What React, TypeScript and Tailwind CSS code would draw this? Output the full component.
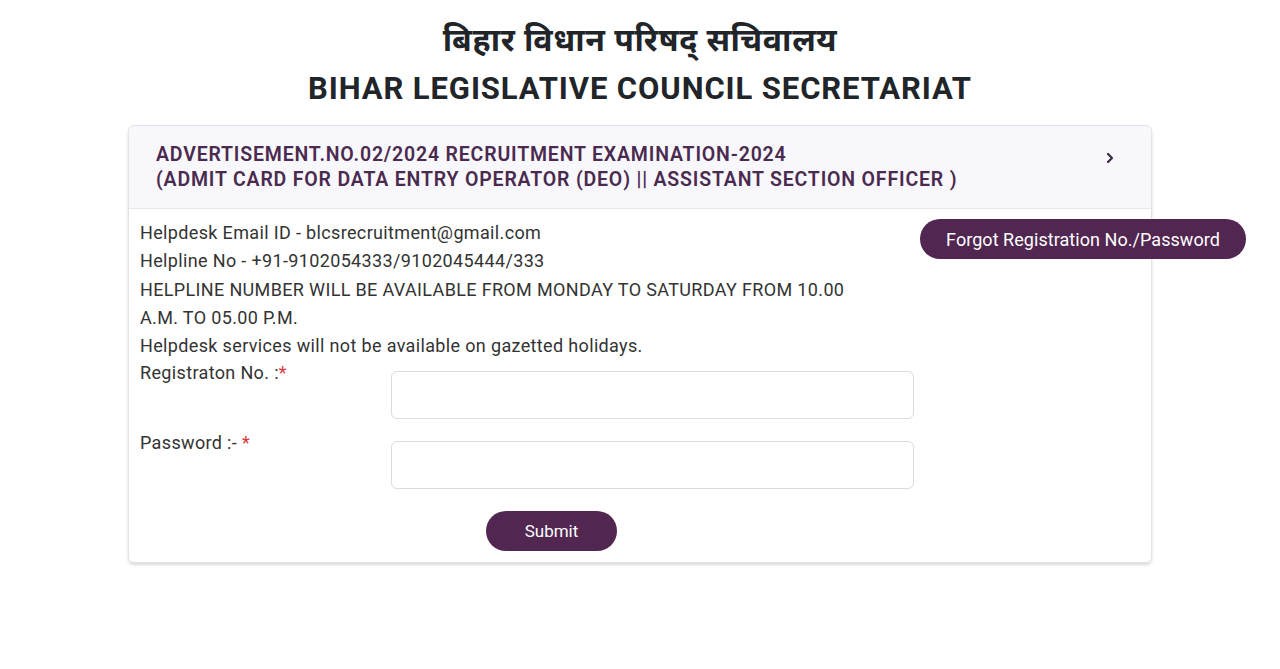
import React from "react";

export default function App() {
  return (
    <div className="min-h-[669px] bg-white text-[#212529]" style={{ fontFamily: 'Roboto, "Noto Sans", "Noto Sans Devanagari", sans-serif' }}>
      <div className="pt-[20px] flex flex-col items-center">
        <h1 className="text-[32px] font-bold leading-[40px] tracking-[0.6px] text-[#212529]">बिहार विधान परिषद् सचिवालय</h1>
        <h2 className="mt-[9px] text-[31px] font-bold leading-[40px] tracking-[0.9px] text-[#212529]">BIHAR LEGISLATIVE COUNCIL SECRETARIAT</h2>
      </div>
      <div className="mx-auto mt-[16px] w-[1024px] rounded-[6px] border border-[#e3e3e8] shadow-[0_2px_3px_rgba(0,0,0,0.15)]">
        <div className="flex items-start justify-between rounded-t-[6px] border-b border-[#e8e8ee] bg-[#f8f8fc] pl-[27px] pr-[36px] pt-[16px] pb-[16px]">
          <div className="text-[19.5px] font-semibold leading-[25px] tracking-[0.82px] text-[#4a2a4e]">
            <div>ADVERTISEMENT.NO.02/2024 RECRUITMENT EXAMINATION-2024</div>
            <div>(ADMIT CARD FOR DATA ENTRY OPERATOR (DEO) || ASSISTANT SECTION OFFICER )</div>
          </div>
          <svg className="mt-[9px]" width="10" height="14" viewBox="0 0 10 14" fill="none">
            <path d="M3 3 L7 7 L3 11" stroke="#3a2a40" strokeWidth="2.2" strokeLinecap="round" strokeLinejoin="round" />
          </svg>
        </div>
        <div className="pl-[11px] pt-[10px] pb-[11px] text-[18px] tracking-[0.35px]">
          <div className="flex">
            <div className="w-[740px] shrink-0 leading-[28.3px] text-[#333]">
              <div>Helpdesk Email ID - blcsrecruitment@gmail.com</div>
              <div>Helpline No - +91-9102054333/9102045444/333</div>
              <div>HELPLINE NUMBER WILL BE AVAILABLE FROM MONDAY TO SATURDAY FROM 10.00 A.M. TO 05.00 P.M.</div>
              <div>Helpdesk services will not be available on gazetted holidays.</div>
            </div>
            <div className="ml-[40px] shrink-0">
              <button className="h-[40px] w-[326px] whitespace-nowrap rounded-full bg-[#512651] tracking-[0.05px] text-white">Forgot Registration No./Password</button>
            </div>
          </div>
          <div className="mt-[-1px] flex">
            <div className="w-[251px] leading-[28px] text-[#333]">Registraton No. :<span className="text-[#d9363e]">*</span></div>
            <input className="mt-[12px] h-[48px] w-[523px] rounded-[6px] border border-[#dcdcdc] bg-white" />
          </div>
          <div className="mt-[10px] flex">
            <div className="w-[251px] leading-[28px] text-[#333]">Password :- <span className="text-[#d9363e]">*</span></div>
            <input type="password" className="mt-[12px] h-[48px] w-[523px] rounded-[6px] border border-[#dcdcdc] bg-white" />
          </div>
          <div className="mt-[22px] pl-[346px]">
            <button className="h-[40px] w-[131px] rounded-full bg-[#512651] text-[17px] tracking-normal text-white">Submit</button>
          </div>
        </div>
      </div>
    </div>
  );
}
